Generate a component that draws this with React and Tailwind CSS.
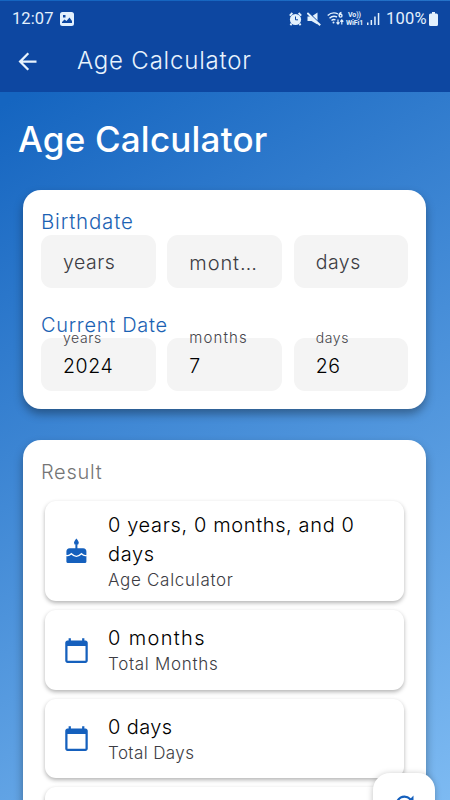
import { MdArrowBack, MdCalendarToday, MdRefresh } from 'react-icons/md'

function CakeIcon({ className }) {
  return (
    <svg className={className} width="1em" height="1em" viewBox="0 0 27 27">
      <path fill="currentColor" d="M13.400.5c1.500 2 2.400 3.200 2.400 4.200a2.400 2.400 0 0 1-4.800 0c0-1 .9-2.200 2.400-4.200zM12.400 7h2v3.200h5.700a3.400 3.400 0 0 1 3.300 3.400v10.200a1.100 1.100 0 0 1-1.100 1.100H4.500a1.100 1.100 0 0 1-1.100-1.100V13.600a3.400 3.400 0 0 1 3.300-3.400h5.700z" />
      <path d="M3 17.300c2.600 1.300 3.600.2 5.400-1.600 1.700 1.700 2.800 2.600 5 2.600s3.300-.9 5-2.600c1.800 1.800 2.800 2.900 5.400 1.600" fill="none" stroke="#fff" strokeWidth="1.300" />
    </svg>
  )
}

const results = [
  {
    icon: CakeIcon,
    value: '0 years, 0 months, and 0 days',
    label: 'Age Calculator',
    height: 'h-[100px]',
    valueStyle: 'tracking-[0.63px]',
    labelStyle: 'tracking-[0.7px]'
  },
  {
    icon: MdCalendarToday,
    value: '0 months',
    label: 'Total Months',
    height: 'h-[80px]',
    valueStyle: 'tracking-[1.35px]',
    labelStyle: 'tracking-[0.7px]'
  },
  {
    icon: MdCalendarToday,
    value: '0 days',
    label: 'Total Days',
    height: 'h-[79px]',
    valueStyle: 'tracking-[0.4px]',
    labelStyle: 'tracking-[0.4px]'
  }
]

function StatusBar() {
  return (
    <div className="flex h-[35px] items-center pl-3 pr-3 font-normal text-[#e3f1fd]">
      <span className="mt-px w-[42px] font-[Roboto] text-[16.5px] leading-none tracking-[0.1px]">12:07</span>
      <svg className="ml-[6px] h-[14px] w-[14px]" viewBox="0 0 14 14" fill="currentColor">
        <path fillRule="evenodd" d="M2.500 0h9A2.500 2.500 0 0 1 14 2.500v9a2.500 2.500 0 0 1-2.500 2.500h-9A2.500 2.500 0 0 1 0 11.500v-9A2.500 2.500 0 0 1 2.500 0zM3 3v2.500h2.500V3zM2 11h10V9L9.500 5.500 6.500 9 4.500 7.500 2 10z" />
      </svg>
      <div className="ml-auto flex items-center">
        <svg className="h-[14px] w-[13px]" viewBox="0 0 13 14">
          <circle cx="6.500" cy="7.500" r="5.600" fill="currentColor" />
          <path d="M.8 3.600 3.400 1M12.200 3.600 9.600 1M2.500 11.500l-1 1.700M10.500 11.500l1 1.700" stroke="currentColor" strokeWidth="1.900" />
          <path d="M6.500 4.500v3.300H9" stroke="#0d47a1" strokeWidth="1" fill="none" />
        </svg>
        <svg className="ml-[5px] h-[14px] w-[14px]" viewBox="0 0 14 14">
          <path d="M.5 4.500h4L10.500.500v12l-6-3.500h-4z" fill="currentColor" />
          <path d="m1 0 13 12.500" stroke="#0d47a1" strokeWidth="1.200" />
          <path d="m.3 1 12.900 12.300" stroke="currentColor" strokeWidth="2" />
        </svg>
        <svg className="ml-[6px] h-[15px] w-[17px]" viewBox="0 0 17 15" fill="none" stroke="currentColor" strokeWidth="1.400">
          <path d="M.7 4.500Q5.500.200 11 3M2.500 7.200Q6 4 10 6M4.500 9.600Q6.500 7.800 8.500 9" />
          <circle cx="6.500" cy="11.500" r="1" fill="currentColor" stroke="none" />
          <path d="M14.500 1.500q-2.500.8-2.300 3" />
          <circle cx="13.600" cy="4.700" r="1.400" />
          <path d="M11 8.500v4.500M9.500 11.300l1.500 1.700 1.500-1.700M14.800 13.500V9M13.300 10.700 14.800 9l1.500 1.700" strokeWidth="1.200" />
        </svg>
        <div className="ml-[2px] flex w-[17px] flex-col items-center font-[Roboto] text-[7px] font-bold leading-[8px] tracking-[-0.1px]">
          <span>Vo))</span>
          <span>WiFi1</span>
        </div>
        <svg className="ml-[4px] h-[14px] w-[13px]" viewBox="0 0 13 14" fill="currentColor">
          <path d="M0 10.500h1.500V13H0zM3.600 8h1.500v5H3.600zM7.200 4.500h1.500V13H7.200zM10.800 1h1.500v12h-1.500z" />
        </svg>
        <span className="ml-[6px] mt-px w-[41px] font-[Roboto] text-[16.5px] leading-none tracking-[0.2px]">100%</span>
        <svg className="ml-[2px] h-[14px] w-[9px]" viewBox="0 0 9 14" fill="currentColor">
          <path d="M3 0h3v1.500h1.500A1.500 1.500 0 0 1 9 3v9.500A1.500 1.500 0 0 1 7.500 14h-6A1.500 1.500 0 0 1 0 12.500V3a1.500 1.500 0 0 1 1.500-1.500H3z" />
        </svg>
      </div>
    </div>
  )
}

function Field({ label, value, labelStyle = 'text-[14px] tracking-[0.6px]' }) {
  return (
    <div className="relative flex h-[53px] min-w-0 flex-1 items-center rounded-[11px] bg-[#f4f4f4] px-[22px]">
      {value ? (
        <>
          <span className={`absolute left-[22px] top-[-9px] leading-[18px] text-[#45454b] ${labelStyle}`}>{label}</span>
          <span className="mt-[4px] text-[19.5px] tracking-[0.6px] text-black">{value}</span>
        </>
      ) : (
        <span className={`mt-[2px] text-[#3c3c43] ${labelStyle}`}>{label}</span>
      )}
    </div>
  )
}

function ResultCard({ icon: Icon, value, label, height, valueStyle, labelStyle }) {
  return (
    <div className={`flex shrink-0 items-center rounded-[11px] bg-white pl-[18px] pr-[40px] shadow-[0_2px_4px_rgba(0,0,0,0.3)] ${height}`}>
      <Icon className="shrink-0 text-[27px] text-[#1560bd]" />
      <div className="ml-[18px]">
        <p className={`text-[20px] leading-[29px] text-black ${valueStyle}`}>{value}</p>
        <p className={`text-[17px] leading-[23px] text-[#3c3c43] ${labelStyle}`}>{label}</p>
      </div>
    </div>
  )
}

export default function App() {
  return (
    <div className="relative flex h-[800px] w-[450px] flex-col overflow-hidden bg-linear-[150deg] from-[#1565c0] from-10% to-[#7dbaf2] pt-px font-[Inter,sans-serif] font-light">
      <header className="h-[91px] shrink-0 bg-[#0d47a1]">
        <StatusBar />
        <div className="flex h-[50px] items-center pl-[14px] text-[#e8f3fd]">
          <MdArrowBack className="text-[27px]" />
          <span className="ml-[36px] text-[24px] tracking-[0.8px]">Age Calculator</span>
        </div>
      </header>

      <h1 className="ml-[18px] mt-[24px] text-[35px] font-medium leading-[46px] tracking-[0.2px] text-white">Age Calculator</h1>

      <section className="ml-[23px] mt-[28px] h-[219px] w-[403px] shrink-0 rounded-[18px] bg-white pl-[18px] pt-[20px] shadow-[0_5px_10px_rgba(0,0,0,0.35)]">
        <h2 className="text-[20.5px] leading-[24px] tracking-[0.8px] text-[#1b62b3]">Birthdate</h2>
        <div className="mt-px flex w-[367.500px] gap-[11.500px]">
          <Field label="years" labelStyle="text-[19.5px] tracking-[0.5px]" />
          <Field label="mont…" labelStyle="text-[20px] tracking-[0.9px]" />
          <Field label="days" labelStyle="text-[19.5px] tracking-[0.5px]" />
        </div>
        <h2 className="mt-[25px] text-[20px] leading-[24px] tracking-[0.7px] text-[#1b62b3]">Current Date</h2>
        <div className="mt-px flex w-[367.500px] gap-[11.500px]">
          <Field label="years" value="2024" />
          <Field label="months" value="7" labelStyle="text-[15px] tracking-[1.1px]" />
          <Field label="days" value="26" />
        </div>
      </section>

      <section className="ml-[23px] mt-[31px] h-[500px] w-[403px] shrink-0 rounded-[18px] bg-white px-[22px] pt-[18px] shadow-[0_5px_10px_rgba(0,0,0,0.35)]">
        <h2 className="ml-[-4px] text-[20px] leading-[28px] tracking-[0.7px] text-[#757575]">Result</h2>
        <div className="mt-[15px] flex w-[359px] flex-col gap-[9px]">
          {results.map((item) => (
            <ResultCard key={item.label} {...item} />
          ))}
          <div className="h-[80px] rounded-[11px] bg-white shadow-[0_2px_4px_rgba(0,0,0,0.3)]" />
        </div>
      </section>

      <button className="absolute left-[373px] top-[773px] flex h-[62px] w-[62px] items-center justify-center rounded-[17px] bg-white shadow-[0_1px_6px_rgba(0,0,0,0.25)]">
        <MdRefresh className="text-[27px] text-[#1560bd]" />
      </button>
    </div>
  )
}
